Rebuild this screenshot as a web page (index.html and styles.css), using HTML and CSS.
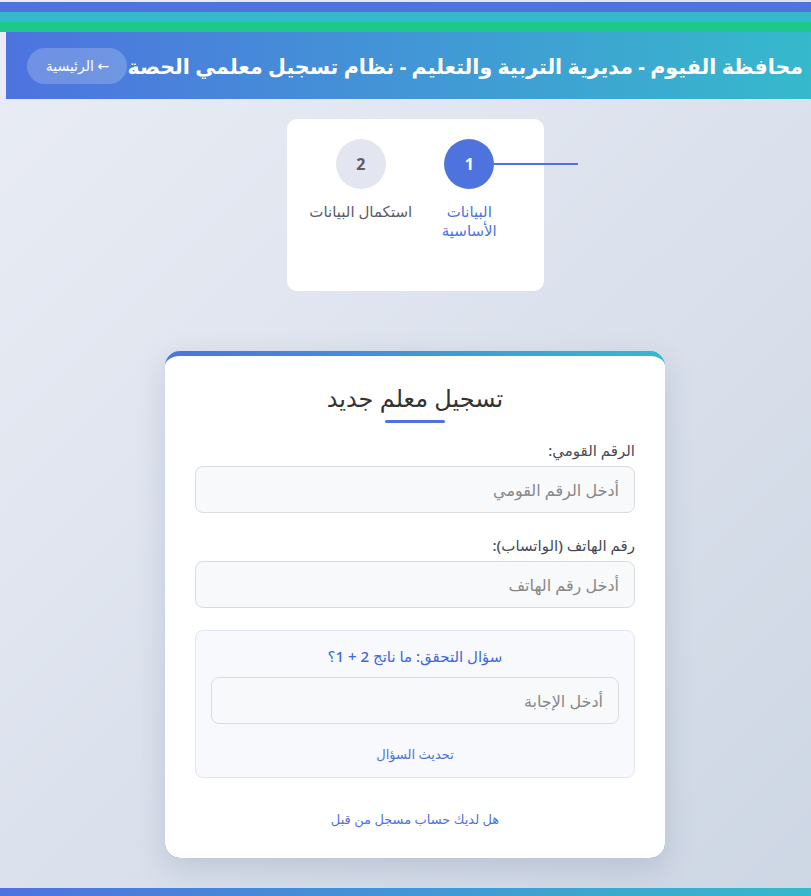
FILE: index.html
```html
<!DOCTYPE html>
<html lang="ar" dir="rtl">
<head>
  <meta charset="UTF-8">
  <title>تسجيل معلم جديد</title>
  <link rel="stylesheet" href="styles.css">
</head>
<body>
  <!-- شرائط الألوان العلوية -->
  <div class="stripes">
    <div class="stripe blue"></div>
    <div class="stripe teal"></div>
    <div class="stripe green"></div>
  </div>

  <header class="site-header">
    <h1>محافظة الفيوم - مديرية التربية والتعليم - نظام تسجيل معلمي الحصة</h1>
    <a href="#" class="home-btn">← الرئيسية</a>
  </header>

  <main class="page">
    <!-- مراحل التسجيل -->
    <div class="steps-card">
      <div class="step active">
        <div class="step-circle">1</div>
        <div class="step-line"></div>
        <div class="step-label">البيانات<br>الأساسية</div>
      </div>
      <div class="step">
        <div class="step-circle">2</div>
        <div class="step-label">استكمال البيانات</div>
      </div>
    </div>

    <!-- نموذج التسجيل -->
    <div class="form-card">
      <h2 class="form-title">تسجيل معلم جديد</h2>

      <div class="field">
        <label for="nid">الرقم القومي:</label>
        <input type="text" id="nid" placeholder="أدخل الرقم القومي">
      </div>

      <div class="field">
        <label for="phone">رقم الهاتف (الواتساب):</label>
        <input type="text" id="phone" placeholder="أدخل رقم الهاتف">
      </div>

      <div class="captcha">
        <div class="captcha-q">سؤال التحقق: ما ناتج 2 + 1؟</div>
        <input type="text" placeholder="أدخل الإجابة">
        <a href="#" class="link refresh">تحديث السؤال</a>
      </div>

      <a href="#" class="link login">هل لديك حساب مسجل من قبل</a>
    </div>
  </main>

  <div class="bottom-bar"></div>
</body>
</html>
```

FILE: styles.css
```css
* {
  margin: 0;
  padding: 0;
  box-sizing: border-box;
}

body {
  font-family: "Noto Sans", "DejaVu Sans", sans-serif;
  background: linear-gradient(135deg, #eaedf5 0%, #dce2ed 50%, #cdd6e4 100%);
  min-height: 100vh;
  color: #5a5c69;
  padding-top: 2px;
  overflow-x: hidden;
}

/* الشرائط العلوية */
.stripe {
  height: 10px;
}
.stripe.blue { background: #4e73df; }
.stripe.teal { background: #36b9cc; }
.stripe.green { background: #1cc88a; }

/* الشريط الرئيسي */
.site-header {
  display: flex;
  align-items: center;
  height: 67px;
  margin-left: 6px;
  padding: 0 8px;
  background: linear-gradient(90deg, #4e73df, #36b9cc);
  white-space: nowrap;
}

.site-header h1 {
  font-size: 20.6px;
  font-weight: 700;
  color: #fff;
}

.home-btn {
  display: inline-block;
  width: 100px;
  height: 36px;
  line-height: 36px;
  text-align: center;
  border-radius: 18px;
  background: rgba(255, 255, 255, 0.2);
  color: #fff;
  font-size: 14px;
  text-decoration: none;
}

.page {
  display: flex;
  flex-direction: column;
  align-items: center;
  padding: 20px 0 60px 19px;
}

/* بطاقة المراحل */
.steps-card {
  display: flex;
  width: 257px;
  height: 172px;
  padding: 20px;
  background: #fff;
  border-radius: 10px;
}

.step {
  position: relative;
  flex: 1;
  display: flex;
  flex-direction: column;
  align-items: center;
}

.step-circle {
  width: 50px;
  height: 50px;
  border-radius: 50%;
  background: #e3e6f0;
  color: #5a5c69;
  font-size: 16px;
  font-weight: 700;
  display: flex;
  align-items: center;
  justify-content: center;
  position: relative;
  z-index: 1;
}

.step-label {
  margin-top: 13px;
  font-size: 15px;
  font-weight: 500;
  line-height: 19px;
  text-align: center;
  color: #5a5c69;
}

.step.active .step-circle {
  background: #4e73df;
  color: #fff;
}

.step.active .step-label {
  color: #4e73df;
}

/* خط الربط بين المراحل */
.step-line {
  position: absolute;
  top: 24px;
  left: 79px;
  width: 84px;
  height: 2px;
  background: #4e73df;
}

/* بطاقة النموذج */
.form-card {
  width: 500px;
  margin-top: 60px;
  padding: 30px 30px 30px;
  background: #fff;
  border-radius: 15px;
  border-top: 5px solid transparent;
  background-image: linear-gradient(#fff, #fff), linear-gradient(90deg, #4e73df, #36b9cc);
  background-origin: border-box;
  background-clip: padding-box, border-box;
  box-shadow: 0 10px 30px rgba(80, 95, 130, 0.2);
  display: flex;
  flex-direction: column;
}

.form-title {
  font-size: 24px;
  font-weight: 400;
  color: #333;
  text-align: center;
  line-height: 30px;
  margin-top: -3px;
  padding-bottom: 10px;
  position: relative;
  margin-bottom: 17px;
}

.form-title::after {
  content: "";
  position: absolute;
  bottom: 0;
  left: 50%;
  transform: translateX(-50%);
  width: 60px;
  height: 3px;
  border-radius: 2px;
  background: #4e73df;
}

.field {
  margin-bottom: 22px;
}

.field label {
  display: block;
  font-size: 15px;
  font-weight: 500;
  color: #484a55;
  margin-bottom: 6px;
}

input {
  width: 100%;
  height: 47px;
  padding: 0 15px;
  border: 1px solid #dcdcdc;
  border-radius: 8px;
  background: #f8f9fa;
  font-family: inherit;
  font-size: 16px;
  color: #333;
}

input::placeholder {
  color: #888;
}

/* صندوق سؤال التحقق */
.captcha {
  display: flex;
  flex-direction: column;
  align-items: center;
  padding: 15px 15px 14px;
  border: 1px solid #e3e6f0;
  border-radius: 8px;
  background: #f8f9fc;
}

.captcha-q {
  font-size: 15px;
  font-weight: 500;
  color: #4068d8;
  margin-bottom: 11px;
}

.link {
  font-size: 13px;
  color: #4e73df;
  text-decoration: none;
  text-align: center;
}

.refresh {
  margin-top: 21px;
}

.login {
  margin-top: 32px;
}

/* الشريط السفلي */
.bottom-bar {
  position: fixed;
  left: 0;
  right: 0;
  bottom: 0;
  height: 8px;
  background: linear-gradient(90deg, #4e73df, #36b9cc);
}
```
